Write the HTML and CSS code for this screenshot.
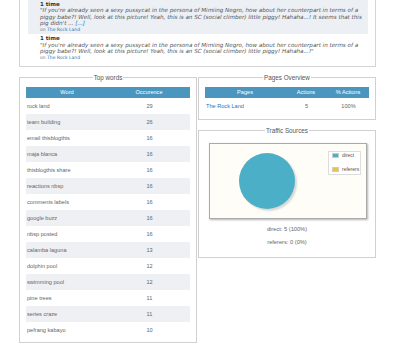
FILE: index.html
```html
<!DOCTYPE html>
<html lang="en">
<head>
  <meta charset="UTF-8" />
  <title>Blog Stats</title>
  <link rel="stylesheet" href="styles.css">
</head>
<body>
<div class="page">
  <div class="recent">
    <div class="entry hl">
      <div class="count">1 time</div>
      <div class="quote">"If you're already seen a sexy pussycat in the persona of Mimiing Negro, how about her counterpart in terms of a piggy babe?! Well, look at this picture! Yeah, this is an SC (social climber) little piggy! Hahaha...! It seems that this pig didn't ... <a href="#">[...]</a></div>
      <div class="src">on <a href="#">The Rock Land</a></div>
    </div>
    <div class="entry">
      <div class="count">1 time</div>
      <div class="quote">"If you're already seen a sexy pussycat in the persona of Mimiing Negro, how about her counterpart in terms of a piggy babe?! Well, look at this picture! Yeah, this is an SC (social climber) little piggy! Hahaha...!"</div>
      <div class="src">on <a href="#">The Rock Land</a></div>
    </div>
  </div>

  <div class="cols">
    <fieldset class="box words">
      <legend>Top words</legend>
      <table class="stats">
        <tr><th>Word</th><th>Occurence</th></tr>
        <tr><td>rock land</td><td class="num">29</td></tr>
        <tr><td>team building</td><td class="num">26</td></tr>
        <tr><td>email thisblogthis</td><td class="num">16</td></tr>
        <tr><td>maja blanca</td><td class="num">16</td></tr>
        <tr><td>thisblogthis share</td><td class="num">16</td></tr>
        <tr><td>reactions nbsp</td><td class="num">16</td></tr>
        <tr><td>comments labels</td><td class="num">16</td></tr>
        <tr><td>google buzz</td><td class="num">16</td></tr>
        <tr><td>nbsp posted</td><td class="num">16</td></tr>
        <tr><td>calamba laguna</td><td class="num">13</td></tr>
        <tr><td>dolphin pool</td><td class="num">12</td></tr>
        <tr><td>swimming pool</td><td class="num">12</td></tr>
        <tr><td>pine trees</td><td class="num">11</td></tr>
        <tr><td>series craze</td><td class="num">11</td></tr>
        <tr><td>pefrang kabayo</td><td class="num">10</td></tr>
      </table>
    </fieldset>

    <div class="side">
      <fieldset class="box pages">
        <legend>Pages Overview</legend>
        <table class="stats">
          <tr><th class="c-page">Pages</th><th class="c-act">Actions</th><th>% Actions</th></tr>
          <tr><td><a href="#">The Rock Land</a></td><td class="num">5</td><td class="num">100%</td></tr>
        </table>
      </fieldset>

      <fieldset class="box traffic">
        <legend>Traffic Sources</legend>
        <div class="chart">
          <div class="pie"></div>
          <div class="chart-legend">
            <div class="key"><span class="swatch direct"></span>direct</div>
            <div class="key"><span class="swatch ref"></span>referers</div>
          </div>
        </div>
        <p class="totals">direct: 5 (100%)<br>referers: 0 (0%)</p>
      </fieldset>
    </div>
  </div>
</div>
</body>
</html>
```

FILE: styles.css
```css
body {
  margin: 0;
  background: #fff;
  color: #666;
  font-family: "Liberation Sans", Arial, sans-serif;
}
a {
  color: #2f70b2;
  text-decoration: none;
}
.page {
  width: 357px;
  margin-left: 19px;
}

/* recent quotes */
.recent {
  margin-top: -6px;
  border: 1px solid #d4d4d4;
  padding: 4px 7px 4px 8px;
}
.entry {
  padding: 1.5px 4px 1.5px 12px;
}
.entry.hl {
  background: #eceff4;
}
.count {
  font: bold 5.5px/6.5px "DejaVu Sans", Verdana, sans-serif;
  color: #333;
}
.quote {
  font: italic 5.6px/6.5px "DejaVu Sans", Verdana, sans-serif;
  color: #555;
}
.src {
  font: 4.5px/5.5px "DejaVu Sans", Verdana, sans-serif;
  color: #777;
}

/* columns */
.cols {
  display: flex;
  gap: 1px;
  margin-top: 7px;
  align-items: flex-start;
}
.side {
  display: flex;
  flex-direction: column;
  gap: 7px;
}
.box {
  width: 178px;
  min-width: 0;
  box-sizing: border-box;
  margin: 0;
  border: 1px solid #d0d0d0;
  padding: 5px 6px 4px;
}
.box legend {
  margin: 0 auto;
  padding: 0 1px;
  font-size: 6.3px;
  line-height: 8px;
  color: #555;
}
.pages {
  padding-bottom: 5px;
}

.stats {
  width: 100%;
  border-collapse: collapse;
  font-size: 5.6px;
}
.stats th {
  background: #4b96bf;
  color: #fff;
  font-weight: normal;
  height: 11px;
  padding: 0;
}
.stats td {
  height: 16px;
  padding: 0 0 0 1px;
}
.stats tr:nth-child(odd) td {
  background: #eef0f3;
}
.words .stats th,
.words .stats td {
  width: 50%;
}
.stats .num {
  text-align: center;
}
.c-page { width: 80px; }
.c-act { width: 42px; }

/* traffic chart */
.traffic {
  padding: 8px 6px 8px;
}
.chart {
  position: relative;
  width: 158px;
  height: 76px;
  box-sizing: border-box;
  margin-left: 4px;
  padding: 9px 0 0 29px;
  border: 1px solid #aaa;
  background: #fefdf7;
  box-shadow: 1px 1px 2px rgba(0, 0, 0, 0.3);
}
.pie {
  width: 56px;
  height: 56px;
  border-radius: 50%;
  background: #4bafc8;
  box-shadow: 2px 2px 2px rgba(0, 0, 0, 0.15);
}
.chart-legend {
  position: absolute;
  left: 118px;
  top: 7px;
  width: 33px;
  height: 24px;
  box-sizing: border-box;
  background: #fff;
  border: 1px solid #ddd;
  padding: 0 0 0 3px;
  display: flex;
  flex-direction: column;
  gap: 7.5px;
  font-size: 5px;
  line-height: 7px;
  color: #555;
}
.key {
  display: flex;
  align-items: center;
  gap: 3px;
}
.swatch {
  width: 5px;
  height: 3px;
  border: 1px solid #ccc;
}
.swatch.direct { background: #4bafc8; }
.swatch.ref { background: #edc240; }
.totals {
  margin: 4.5px 0 0;
  text-align: center;
  font-size: 5.7px;
  line-height: 13px;
  color: #666;
}
```
